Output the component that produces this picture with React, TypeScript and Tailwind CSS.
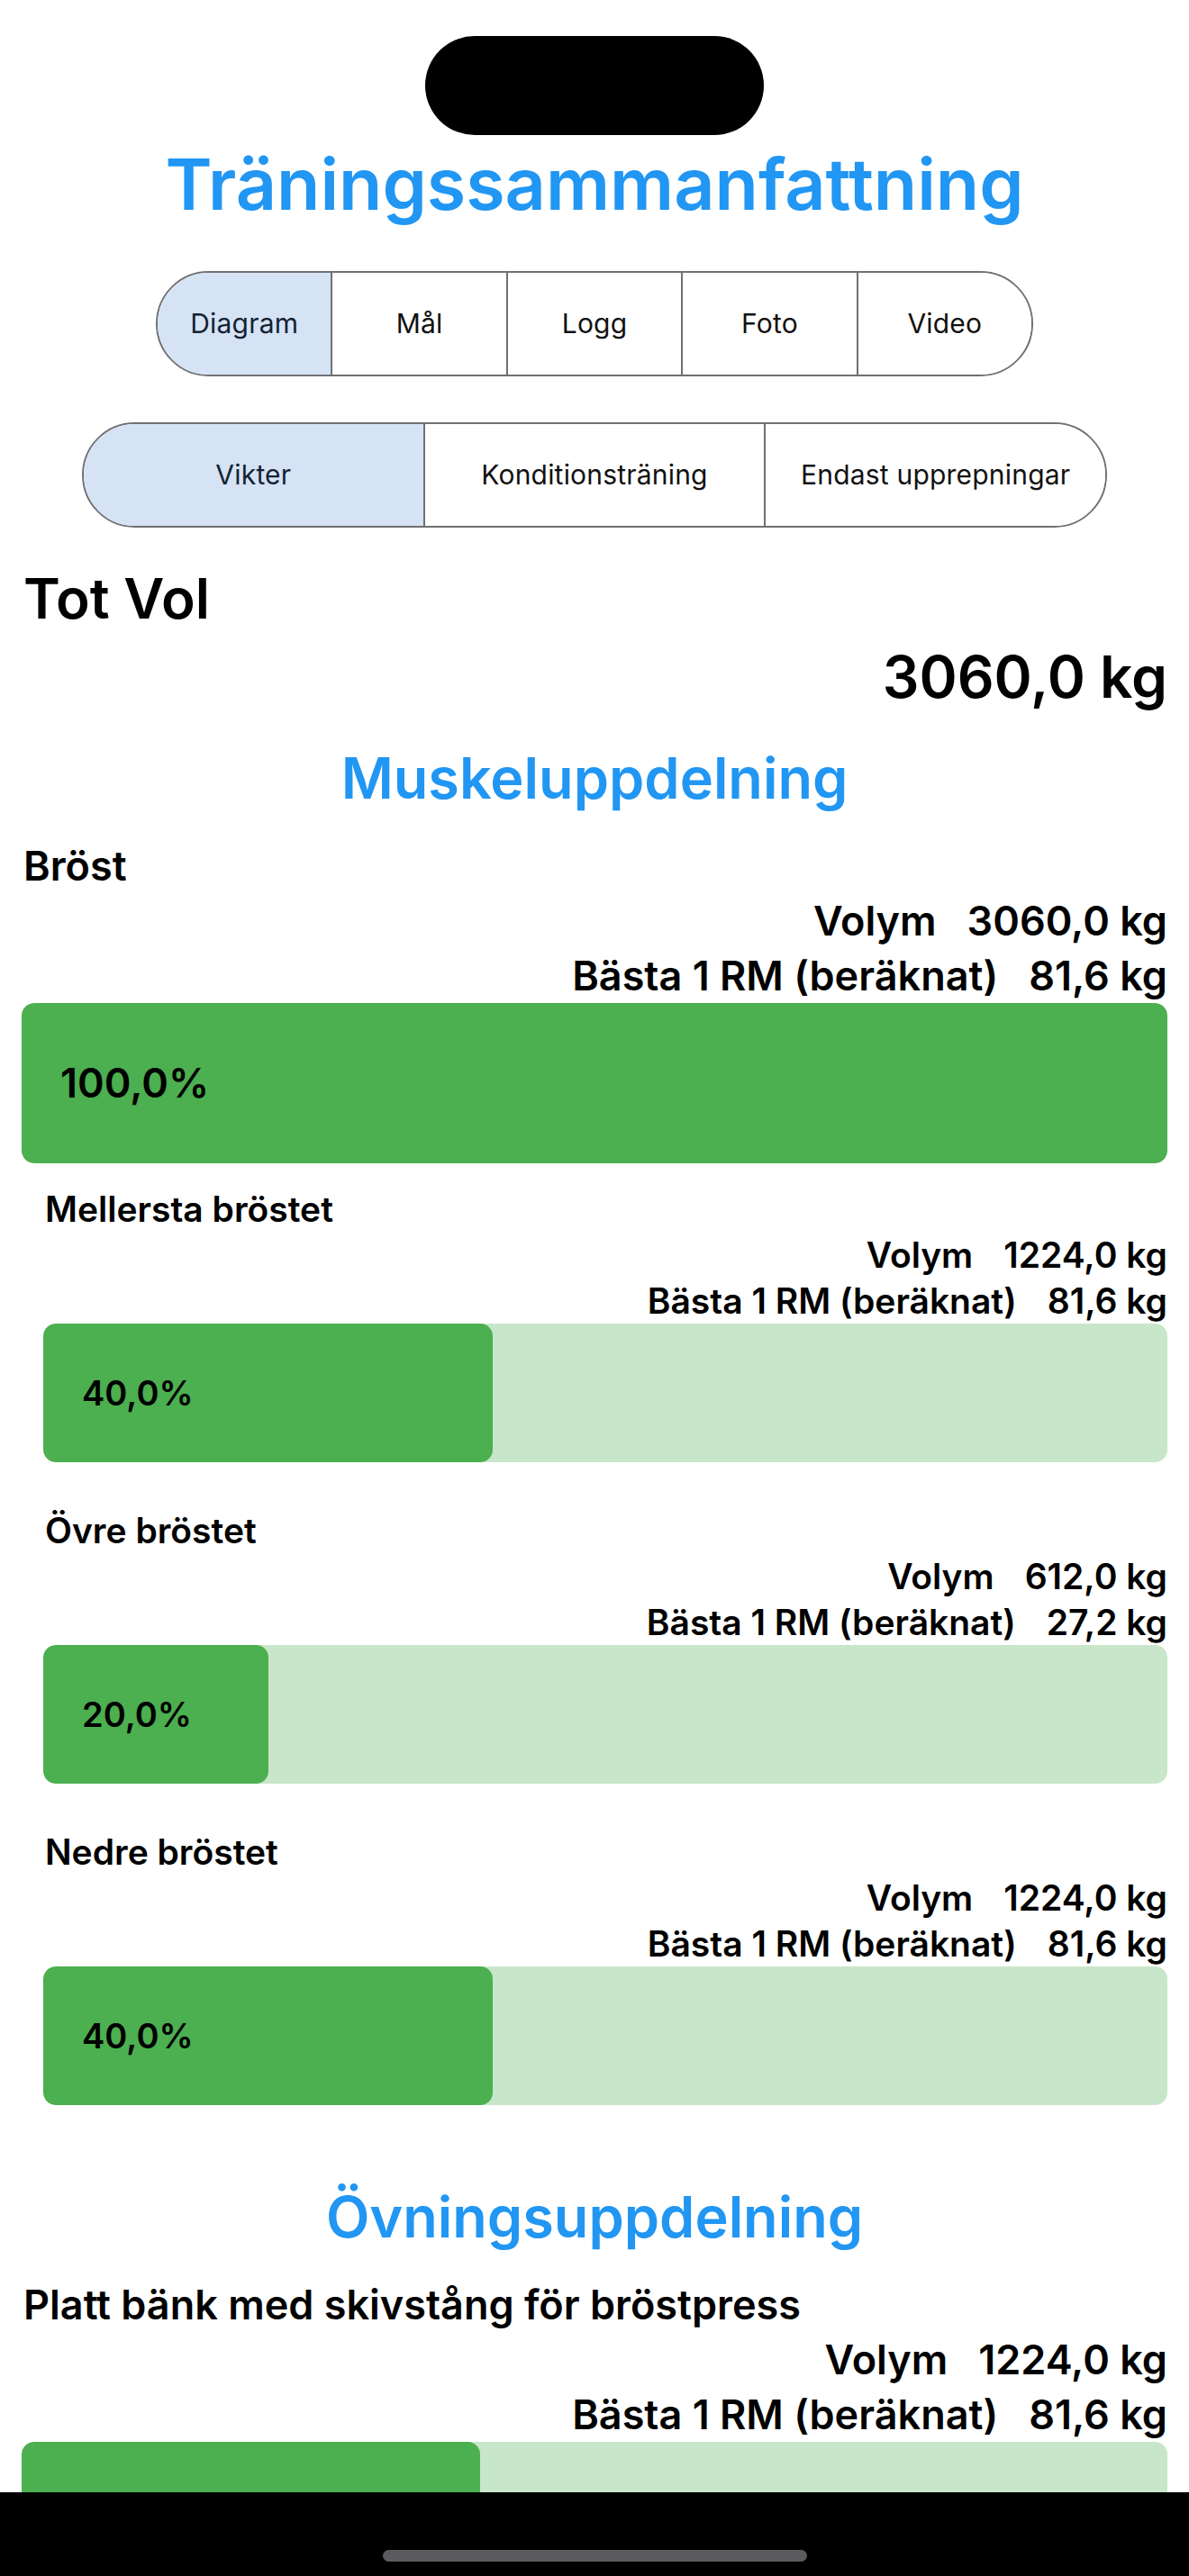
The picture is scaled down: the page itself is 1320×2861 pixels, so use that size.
import React from 'react';

interface Row {
  label: string;
  value: string;
}

interface SubGroup {
  name: string;
  volume: string;
  best: string;
  pct: number;
}

const tabsTop = ['Diagram', 'Mål', 'Logg', 'Foto', 'Video'];
const tabsType = ['Vikter', 'Konditionsträning', 'Endast upprepningar'];

const subGroups: SubGroup[] = [
  { name: 'Mellersta bröstet', volume: '1224,0 kg', best: '81,6 kg', pct: 40 },
  { name: 'Övre bröstet', volume: '612,0 kg', best: '27,2 kg', pct: 20 },
  { name: 'Nedre bröstet', volume: '1224,0 kg', best: '81,6 kg', pct: 40 },
];

function Segmented({ items, className }: { items: string[]; className: string }) {
  return (
    <div
      className={`mx-auto flex h-[117px] overflow-hidden rounded-full border-2 border-[#707074] ${className}`}
    >
      {items.map((item, i) => (
        <div
          key={item}
          className={`flex flex-1 items-center justify-center text-[30px] tracking-[0.2px] ${
            i > 0 ? 'border-l-2 border-[#707074]' : ''
          } ${i === 0 ? 'bg-[#d5e3f5] text-[#142233]' : 'bg-white text-[#111111]'}`}
        >
          {item}
        </div>
      ))}
    </div>
  );
}

function StatRows({ rows, big }: { rows: Row[]; big: boolean }) {
  return (
    <>
      {rows.map((r) => (
        <div
          key={r.label}
          className={`flex justify-end font-semibold text-black ${
            big ? 'gap-[34px] text-[45px] leading-[61px]' : 'gap-[34px] text-[39px] leading-[51px]'
          }`}
        >
          <span>{r.label}</span>
          <span>{r.value}</span>
        </div>
      ))}
    </>
  );
}

function Bar({ pct, big }: { pct: number; big: boolean }) {
  return (
    <div
      className={`relative overflow-hidden rounded-[14px] bg-[#c8e6c9] ${big ? 'h-[178px]' : 'h-[154px]'}`}
    >
      <div
        className="absolute inset-y-0 left-0 rounded-[14px] bg-[#4caf50]"
        style={{ width: `${pct}%` }}
      />
      <div
        className={`relative flex h-full items-center pl-[43px] font-semibold text-black ${
          big ? 'text-[45px]' : 'text-[38px]'
        }`}
      >
        {pct.toFixed(1).replace('.', ',')}%
      </div>
    </div>
  );
}

export default function App() {
  return (
    <div className="relative h-[2861px] w-[1320px] overflow-hidden bg-white font-['Inter',sans-serif]">
      {/* dynamic island */}
      <div className="mx-auto mt-[40px] h-[110px] w-[376px] rounded-full bg-black" />

      <h1 className="mt-[17px] text-center text-[79px] font-semibold leading-[75px] text-[#2196f3]">
        Träningssammanfattning
      </h1>

      <Segmented items={tabsTop} className="mt-[59px] w-[974px]" />
      <Segmented items={tabsType} className="mt-[51px] w-[1138px]" />

      <main className="px-[24px]">
        <div className="mt-[48px] pl-[2px] text-[62px] font-semibold leading-[62px] text-black">Tot Vol</div>
        <div className="mt-[24px] text-right text-[64px] font-semibold leading-[64px] text-black">3060,0 kg</div>

        <h2 className="mt-[40px] text-center text-[63px] font-semibold leading-[80px] text-[#2196f3]">
          Muskeluppdelning
        </h2>

        <section className="mt-[27px]">
          <div className="pl-[2px] text-[45px] font-semibold leading-[61px] text-black">Bröst</div>
          <StatRows
            big
            rows={[
              { label: 'Volym', value: '3060,0 kg' },
              { label: 'Bästa 1 RM (beräknat)', value: '81,6 kg' },
            ]}
          />
          <Bar pct={100} big />

          <div className="pl-[24px]">
            {subGroups.map((g) => (
              <div key={g.name} className="py-[25px]">
                <div className="pl-[2px] text-[39px] font-semibold leading-[51px] text-black">{g.name}</div>
                <StatRows
                  big={false}
                  rows={[
                    { label: 'Volym', value: g.volume },
                    { label: 'Bästa 1 RM (beräknat)', value: g.best },
                  ]}
                />
                <Bar pct={g.pct} big={false} />
              </div>
            ))}
          </div>
        </section>

        <h2 className="mt-[59px] text-center text-[63px] font-semibold leading-[80px] text-[#2196f3]">
          Övningsuppdelning
        </h2>

        <section className="mt-[27px]">
          <div className="pl-[2px] text-[45px] font-semibold leading-[61px] text-black">
            Platt bänk med skivstång för bröstpress
          </div>
          <StatRows
            big
            rows={[
              { label: 'Volym', value: '1224,0 kg' },
              { label: 'Bästa 1 RM (beräknat)', value: '81,6 kg' },
            ]}
          />
          <Bar pct={40} big />
        </section>
      </main>

      {/* home indicator strip */}
      <div className="absolute inset-x-0 bottom-0 flex h-[93px] justify-center bg-black">
        <div className="mt-[64px] h-[13px] w-[471px] rounded-full bg-[#5b5b5f]" />
      </div>
    </div>
  );
}
